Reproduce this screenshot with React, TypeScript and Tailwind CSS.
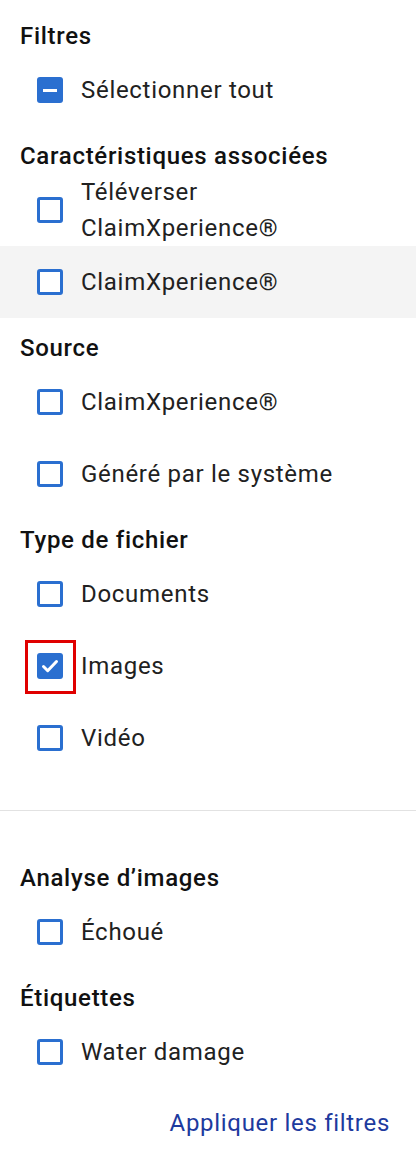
import { ReactNode } from "react";

type CheckState = "none" | "checked" | "partial";

function Box({ state }: { state: CheckState }) {
  if (state === "none") {
    return <span className="block w-[26px] h-[26px] shrink-0 rounded-[3px] border-[3px] border-[#2a6fd0] bg-white" />;
  }
  return (
    <span className="flex w-[26px] h-[26px] shrink-0 items-center justify-center rounded-[3px] bg-[#2a6fd0]">
      {state === "checked" ? (
        <svg width="22" height="22" viewBox="0 0 22 22" fill="none">
          <path d="M4.5 11.5l4.2 4.2L17.5 6.5" stroke="white" strokeWidth="3" strokeLinecap="round" strokeLinejoin="round" />
        </svg>
      ) : (
        <span className="block w-[14px] h-[3px] bg-white" />
      )}
    </span>
  );
}

function Row({ state = "none", children, shaded, focused }: { state?: CheckState; children: ReactNode; shaded?: boolean; focused?: boolean }) {
  return (
    <div className={`flex min-h-[72px] items-center pl-[37px] ${shaded ? "bg-[#f4f4f4]" : ""}`}>
      <span className="relative">
        {focused && <span className="absolute -left-[12px] -top-[13px] w-[51px] h-[54px] border-[3px] border-[#e00000]" />}
        <Box state={state} />
      </span>
      <span className="ml-[18px] text-[24px] leading-[36px] tracking-[0.7px] text-[#212121]">{children}</span>
    </div>
  );
}

function Heading({ children, first }: { children: ReactNode; first?: boolean }) {
  return (
    <h3 className={`${first ? "" : "mt-3"} px-5 text-[24px] leading-[36px] font-medium tracking-[0.7px] text-[#111]`}>{children}</h3>
  );
}

export default function App() {
  return (
    <div className="w-[416px] min-h-[1164px] bg-white pt-[18px] font-['Roboto',sans-serif]">
      <Heading first>Filtres</Heading>
      <Row state="partial">Sélectionner tout</Row>

      <Heading>Caractéristiques associées</Heading>
      <Row>
        Téléverser
        <br />
        ClaimXperience®
      </Row>
      <Row shaded>ClaimXperience®</Row>

      <Heading>Source</Heading>
      <Row>ClaimXperience®</Row>
      <Row>Généré par le système</Row>

      <Heading>Type de fichier</Heading>
      <Row>Documents</Row>
      <Row state="checked" focused>Images</Row>
      <Row>Vidéo</Row>

      <div className="mt-9 border-t border-[#e2e2e2] pt-[49px]">
        <Heading first>Analyse d’images</Heading>
        <Row>Échoué</Row>

        <Heading>Étiquettes</Heading>
        <Row>Water damage</Row>
      </div>

      <div className="mt-[17px] flex justify-end pr-[26px]">
        <button className="h-9 text-[24px] leading-[36px] tracking-[0.7px] text-[#1d3a9e]">Appliquer les filtres</button>
      </div>
    </div>
  );
}
